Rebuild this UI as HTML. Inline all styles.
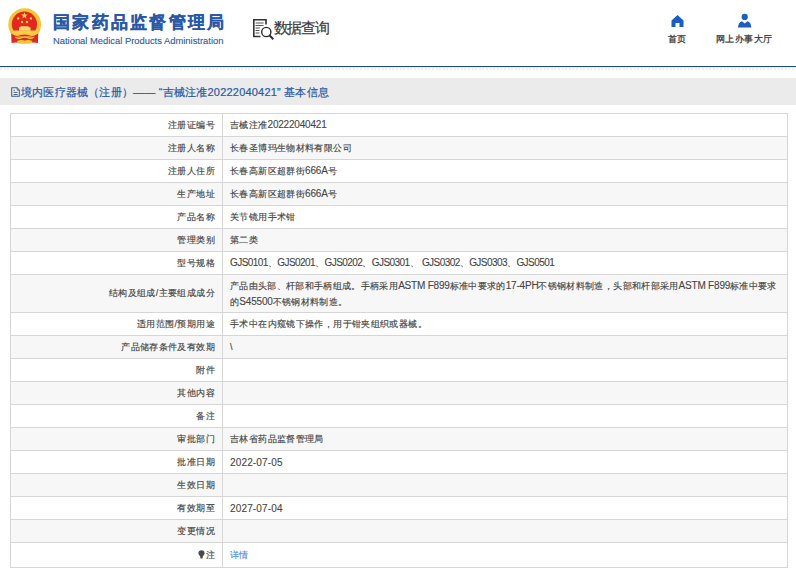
<!DOCTYPE html>
<html><head><meta charset="utf-8">
<style>
*{margin:0;padding:0;box-sizing:border-box}
html,body{width:796px;height:573px;overflow:hidden;background:#fff;font-family:"Liberation Sans",sans-serif}
.abs{position:absolute}
#hdr{position:absolute;left:0;top:0;width:796px;height:66px;background:#fff}
.title{position:absolute;left:53px;top:11px;font-size:17px;letter-spacing:2.25px;font-weight:bold;color:#2a58a6;-webkit-text-stroke:0.25px #2a58a6;white-space:nowrap}
.en{position:absolute;left:53px;top:35px;font-size:9.4px;color:#2a58a6;-webkit-text-stroke:0.1px #2a58a6;white-space:nowrap}
.q{position:absolute;left:273.5px;top:18.5px;font-size:15px;letter-spacing:-1.05px;color:#3a3a3a;-webkit-text-stroke:0.2px #3a3a3a;white-space:nowrap}
.nav{position:absolute;font-size:9px;letter-spacing:0.4px;color:#333;-webkit-text-stroke:0.25px #333;white-space:nowrap}
#bline{position:absolute;left:0;top:66px;width:796px;height:1px;background:#1f4b7c}
#dots{position:absolute;left:0;top:67px;width:796px;height:1px;background:#ddf1f8}#dots2{position:absolute;left:0;top:68px;width:796px;height:2px;background:repeating-linear-gradient(90deg,#eef1f6 0 2px,#fff 2px 3.6px)}
#band{position:absolute;left:0;top:78px;width:796px;height:27px;background:#ebebeb}
.bt{position:absolute;left:21px;top:85px;font-size:11px;letter-spacing:0.21px;color:#2a58a6;-webkit-text-stroke:0.2px #2a58a6;white-space:nowrap}
table{position:absolute;left:10px;top:113px;width:778px;border-collapse:collapse;table-layout:fixed;font-size:9px;letter-spacing:0.38px;color:#444;-webkit-text-stroke:0.15px #444}
td{border:1px solid #d6d6d6;padding:0;white-space:nowrap}
tr{height:23px}
td.l{width:212px;text-align:right;padding-right:7px}
td.v{padding-left:7px}
tr:nth-child(even) td{background:#f7f7f7}
.gjs .n{letter-spacing:-0.55px}
.n{font-size:10px;letter-spacing:-0.2px;-webkit-text-stroke:0.1px #444}
</style></head><body>
<div id="hdr">
  <svg class="abs" style="left:0;top:0" width="50" height="50" viewBox="0 0 50 50">
    <circle cx="24.7" cy="24.6" r="16.4" fill="#f3c63a"/>
    <circle cx="24.4" cy="24.2" r="12.6" fill="#e2281e"/>
    <path d="M11.2 33.5 Q16 37 24.7 37 Q33.5 37 38.2 33.5 L38 43 Q33 41.8 30 43.2 L19.5 43.2 Q16.5 41.8 11.5 43Z" fill="#dc2a20"/>
    <path d="M13.2 30.6 H35.8 V34 Q30 35.5 24.6 34.6 Q19 35.5 13.2 34Z" fill="#f6cf45"/>
    <path d="M20.5 26.3 H28.6 V27.2 H30.5 V30.7 H19 V27.2 H20.5Z" fill="#f7d56a"/>
    <path d="M15 36.6 Q19.5 38.3 22 36.8 Q24.7 35.6 27.4 36.8 Q30 38.3 34.4 36.6 L34 38 Q30 39.8 27.4 38.2 Q24.7 37.2 22 38.2 Q19.5 39.8 15.4 38Z" fill="#f3c63a"/>
    <path d="M17 41 Q21 39.2 24.7 40.4 Q28.5 39.2 32.4 41 L32 43.2 H17.4Z" fill="#f3c63a"/>
    <path d="M24.4 12.3 L25.3 14.6 L27.7 14.6 L25.8 16.1 L26.5 18.5 L24.4 17 L22.3 18.5 L23 16.1 L21.1 14.6 L23.5 14.6Z" fill="#f8d84a"/>
    <circle cx="18.2" cy="18.4" r="1.2" fill="#f5cf4a"/>
    <circle cx="30.9" cy="18.4" r="1.2" fill="#f5cf4a"/>
    <circle cx="22" cy="22" r="1.2" fill="#f5cf4a"/>
    <circle cx="27" cy="22" r="1.2" fill="#f5cf4a"/>
  </svg>
  <div class="title">国家药品监督管理局</div>
  <div class="en">National Medical Products Administration</div>
  <svg class="abs" style="left:252px;top:18px" width="24" height="24" viewBox="0 0 24 24">
    <path d="M8.5 18.5H1.8V1.8H14V6.6" fill="none" stroke="#333" stroke-width="1.6"/>
    <path d="M3.6 5h8M3.6 7.5h8M3.6 10h4.3M3.6 12.5h3.8M3.6 15h3.8" stroke="#555" stroke-width="1.05"/>
    <circle cx="14.3" cy="14" r="4.6" fill="#fff" stroke="#2b2b2b" stroke-width="1.4"/>
    <path d="M17.4 17.2l3.9 4" stroke="#2b2b2b" stroke-width="2"/>
  </svg>
  <div class="q">数据查询</div>
  <svg class="abs" style="left:671px;top:15px" width="13" height="12" viewBox="0 0 13 12">
    <path d="M6.5 0L12.5 5.5V12H8.5V8H4.5V12H0.5V5.5Z" fill="#1a5fbf"/>
  </svg>
  <div class="nav" style="left:668px;top:33px">首页</div>
  <svg class="abs" style="left:738px;top:13px" width="14" height="15" viewBox="0 0 14 15">
    <circle cx="6.7" cy="3.9" r="3.1" fill="#1a5fbf"/>
    <path d="M0 14.5 Q0.3 9.2 4 8.2 L6.7 10.4 L9.4 8.2 Q13.1 9.2 13.3 14.5Z" fill="#1a5fbf"/>
  </svg>
  <div class="nav" style="left:716px;top:33px">网上办事大厅</div>
</div>
<div id="bline"></div>
<div id="dots"></div><div id="dots2"></div>
<div id="band"></div>
<svg class="abs" style="left:11px;top:87px" width="10" height="11" viewBox="0 0 10 11">
  <path d="M0.7 0.7H5.9L8.3 3.1V9.2H0.7Z" fill="#eef6f9" stroke="#3b5a86" stroke-width="1.05" stroke-linejoin="round"/>
  <path d="M6 0.9V3.2H8.2" fill="#9fb6d6" stroke="#3b5a86" stroke-width="0.6"/>
  <path d="M2.5 3.3H4M2.5 5.4H6.6M2.5 7.5H6.6" stroke="#3b5a86" stroke-width="0.95"/>
</svg>
<div class="bt">境内医疗器械（注册）—— “吉械注准20222040421” 基本信息</div>
<table>
<tr><td class="l">注册证编号</td><td class="v">吉械注准<span class="n">20222040421</span></td></tr>
<tr><td class="l">注册人名称</td><td class="v">长春圣博玛生物材料有限公司</td></tr>
<tr><td class="l">注册人住所</td><td class="v">长春高新区超群街<span class="n">666A</span>号</td></tr>
<tr><td class="l">生产地址</td><td class="v">长春高新区超群街<span class="n">666A</span>号</td></tr>
<tr><td class="l">产品名称</td><td class="v">关节镜用手术钳</td></tr>
<tr><td class="l">管理类别</td><td class="v">第二类</td></tr>
<tr><td class="l">型号规格</td><td class="v gjs"><span class="n">GJS0101</span>、<span class="n">GJS0201</span>、<span class="n">GJS0202</span>、<span class="n">GJS0301</span>、 <span class="n">GJS0302</span>、<span class="n">GJS0303</span>、<span class="n">GJS0501</span></td></tr>
<tr style="height:38px"><td class="l">结构及组成/主要组成成分</td><td class="v" style="line-height:16px;white-space:nowrap;letter-spacing:0.34px">产品由头部、杆部和手柄组成。手柄采用<span class="n">ASTM F899</span>标准中要求的<span class="n">17-4PH</span>不锈钢材料制造，头部和杆部采用<span class="n">ASTM F899</span>标准中要求<br>的<span class="n">S45500</span>不锈钢材料制造。</td></tr>
<tr><td class="l">适用范围/预期用途</td><td class="v">手术中在内窥镜下操作，用于钳夹组织或器械。</td></tr>
<tr><td class="l">产品储存条件及有效期</td><td class="v">\</td></tr>
<tr><td class="l">附件</td><td class="v"></td></tr>
<tr><td class="l">其他内容</td><td class="v"></td></tr>
<tr><td class="l">备注</td><td class="v"></td></tr>
<tr><td class="l">审批部门</td><td class="v">吉林省药品监督管理局</td></tr>
<tr><td class="l">批准日期</td><td class="v"><span class="n" style="letter-spacing:0.15px">2022-07-05</span></td></tr>
<tr><td class="l">生效日期</td><td class="v"></td></tr>
<tr><td class="l">有效期至</td><td class="v"><span class="n" style="letter-spacing:0.15px">2027-07-04</span></td></tr>
<tr><td class="l">变更情况</td><td class="v"></td></tr>
<tr style="height:25px"><td class="l"><svg width="7" height="9" viewBox="0 0 7 9" style="vertical-align:-1px;margin-right:1px"><path d="M3.5 0.3C1.6 0.3 0.4 1.6 0.4 3.3C0.4 4.8 1.6 5.6 2.2 6.6L2.4 8H4.6L4.8 6.6C5.4 5.6 6.6 4.8 6.6 3.3C6.6 1.6 5.4 0.3 3.5 0.3Z" fill="#4a4a4a"/><rect x="2.5" y="8.1" width="2" height="0.8" fill="#888"/></svg>注</td><td class="v" style="color:#3f8be3;-webkit-text-stroke:0.1px #3f8be3">详情</td></tr>
</table>
</body></html>
